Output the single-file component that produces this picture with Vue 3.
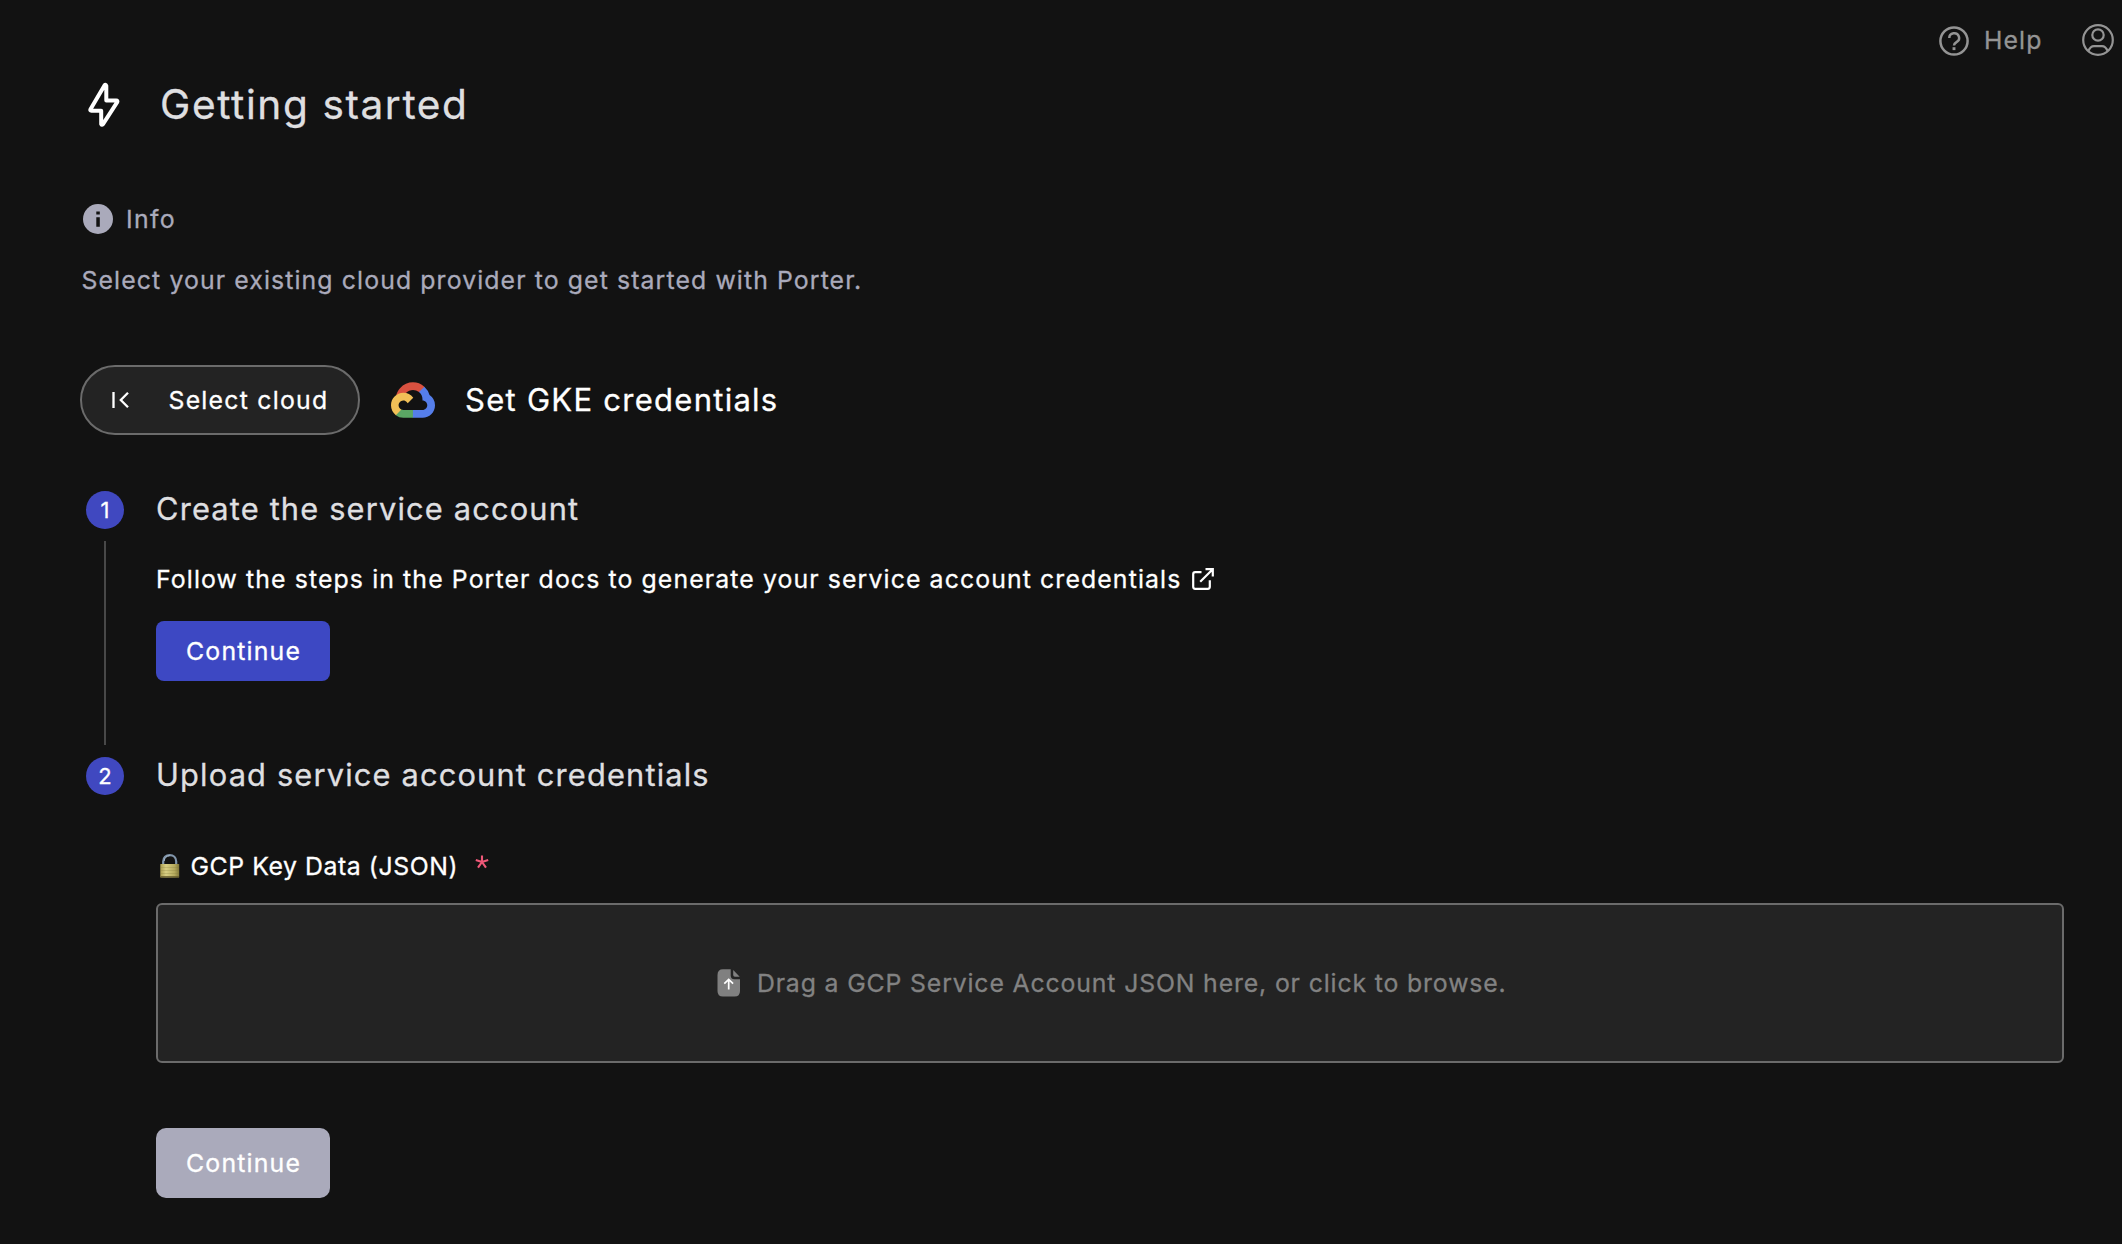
<script setup>
const steps = [
  { number: 1, title: 'Create the service account' },
  { number: 2, title: 'Upload service account credentials' },
]
</script>

<template>
  <div class="page">
    <nav class="topbar">
      <a class="help">
        <svg width="30" height="30" viewBox="0 0 30 30" fill="none" stroke="currentColor" stroke-width="2.5">
          <circle cx="15" cy="15" r="13.6" />
          <path d="M10.3 12a4.9 4.7 0 1 1 7.2 4.1c-1.7 1-2.5 1.8-2.5 3.4" />
          <path d="M15 21.2v2.9" stroke-width="2.9" />
        </svg>
        <span class="t-help">Help</span>
      </a>
      <svg class="user" width="32" height="32" viewBox="0 0 32 32" fill="none" stroke="currentColor" stroke-width="2.2">
        <circle cx="16" cy="16" r="14.8" />
        <circle cx="16" cy="11" r="5.7" />
        <path d="M6.3 27c1.500-3.600 3.200-4.900 5.700-4.900h8c2.500 0 4.200 1.300 5.700 4.900" />
      </svg>
    </nav>

    <header class="title">
      <svg width="34" height="46" viewBox="0 0 34 46" fill="none" stroke="#fff" stroke-width="4" stroke-linejoin="round">
        <path d="M17.600 3.200L3.500 27.200q-.8 1.500.9 1.500H14.200V42q.5 1.500 1.800.2L30.200 20.200q.8-1.700-1-1.700H19.300V3.800q-.6-1.700-1.700-.6z" />
      </svg>
      <h1>Getting started</h1>
    </header>

    <div class="info">
      <svg width="30" height="30" viewBox="0 0 30 30">
        <circle cx="15" cy="15" r="15" fill="#aaaabb" />
        <path d="M13.300 7.500h3.500v3h-3.500zM13.300 13.200h3.500v9.600h-3.500z" fill="#121212" />
      </svg>
      <span class="t-info">Info</span>
    </div>
    <p class="lead">Select your existing cloud provider to get started with Porter.</p>

    <div class="provider">
      <button class="back">
        <svg width="18" height="18" viewBox="0 0 18 18" fill="none" stroke="#fff" stroke-width="2.300">
          <path d="M1.500 1v16M16 1.700L8.800 9l7.200 7.300" />
        </svg>
        <span>Select cloud</span>
      </button>
      <svg class="cloud" width="44" height="36" viewBox="0 0 256 206">
        <path fill="#d95140" d="M170.252 56.819l22.253-22.253 1.483-9.370C153.437-11.677 88.976-7.496 52.420 33.920 42.267 45.423 34.734 59.764 30.717 74.573l7.970-1.123 44.505-7.340 3.436-3.513c19.797-21.742 53.270-24.667 76.128-6.168l7.496.390z" />
        <path fill="#557eea" d="M224.205 73.918a100.250 100.250 0 0 0-30.217-48.722l-31.232 31.232a55.515 55.515 0 0 1 20.379 44.037v5.544c15.350 0 27.797 12.445 27.797 27.796 0 15.352-12.446 27.573-27.797 27.573h-55.671l-5.466 5.934v33.340l5.466 5.231h55.671c39.930.311 72.553-31.494 72.864-71.424a72.303 72.303 0 0 0-31.794-60.541" />
        <path fill="#5ba664" d="M71.870 205.796h55.593V161.290H71.870a27.275 27.275 0 0 1-11.400-2.498l-7.887 2.420-22.409 22.253-1.952 7.574c12.567 9.489 27.900 14.825 43.648 14.757" />
        <path fill="#f1c057" d="M71.870 61.425C31.940 61.663-.237 94.227.001 134.157a72.301 72.301 0 0 0 28.221 56.880l32.248-32.246c-13.990-6.322-20.208-22.786-13.887-36.776 6.320-13.990 22.786-20.208 36.775-13.888a27.796 27.796 0 0 1 13.887 13.888l32.248-32.248A72.224 72.224 0 0 0 71.870 61.425" />
      </svg>
      <h2>Set GKE credentials</h2>
    </div>

    <section class="step first">
      <div class="rail">
        <span class="badge">{{ steps[0].number }}</span>
        <span class="line"></span>
      </div>
      <div class="body">
        <h3>{{ steps[0].title }}</h3>
        <a class="docs">
          <span>Follow the steps in the Porter docs to generate your service account credentials</span>
          <svg width="22" height="22" viewBox="0 0 22 22" fill="none" stroke="#fff" stroke-width="2.200">
            <path d="M9.500 4.200H3.200Q1.200 4.200 1.200 6.200V18.800Q1.200 20.800 3.200 20.800H15.800Q17.800 20.800 17.800 18.800V12.300M13.500 1.200H20.800V8.500M20.500 1.500L8.200 13.800" />
          </svg>
        </a>
        <button class="btn primary"><span>Continue</span></button>
      </div>
    </section>

    <section class="step">
      <div class="rail">
        <span class="badge">{{ steps[1].number }}</span>
      </div>
      <div class="body">
        <h3>{{ steps[1].title }}</h3>
        <label class="field">
          <svg width="20" height="24" viewBox="0 0 20 24">
            <defs>
              <linearGradient id="brass" x1="0" x2="1">
                <stop offset="0" stop-color="#aa9d50" />
                <stop offset=".3" stop-color="#d9cf84" />
                <stop offset=".75" stop-color="#b5aa5d" />
                <stop offset="1" stop-color="#82783a" />
              </linearGradient>
            </defs>
            <path d="M3.200 11V7.500C3.200 3.500 6 1.200 9.700 1.200S16.200 3.500 16.200 7.500V11" fill="none" stroke="#8195aa" stroke-width="2.200" />
            <path d="M4.200 7C4.500 3.800 6.600 2 9.700 1.700" fill="none" stroke="#b9cfe4" stroke-width=".8" />
            <rect x=".3" y="10" width="18.900" height="13.500" rx=".6" fill="url(#brass)" />
            <path d="M.6 22.800H19" stroke="#655b2c" stroke-width="1.200" />
            <path d="M.6 13.500H19M.6 16.500H19M.6 19.500H19" stroke="#827a3c" stroke-width=".5" opacity=".5" />
          </svg>
          <span class="t-key">GCP Key Data (JSON)</span>
          <svg class="required" width="14" height="14" viewBox="0 0 14 14" stroke="#ef5878" stroke-width="2.100">
            <path d="M7 7V.5M7 7L.8 5M7 7l6.200-2M7 7l-4 5.700M7 7l4 5.700" />
          </svg>
        </label>
        <div class="drop">
          <svg width="24" height="28" viewBox="0 0 24 28">
            <path fill="#808080" d="M6 .3H13.700V6.500Q13.700 10.200 17.300 10.200H23V22Q23 27.500 17.500 27.500H6Q.5 27.500 .5 22V6Q.5.3 6 .3zM16.200 1L22.700 7.800H18Q16.200 7.800 16.200 6z" />
            <path d="M11.700 20.500V11M7.300 14.700L11.700 10.400L16.100 14.700" fill="none" stroke="#fff" stroke-width="1.700" />
          </svg>
          <span>Drag a GCP Service Account JSON here, or click to browse.</span>
        </div>
        <button class="btn disabled" disabled><span>Continue</span></button>
      </div>
    </section>
  </div>
</template>

<style>
body {
  background: #121212;
}
</style>

<style scoped>
.page {
  box-sizing: border-box;
  width: 2122px;
  height: 1244px;
  padding: 0 58px 0 80px;
  overflow: hidden;
  background: #121212;
  color: #fff;
  font: 400 24.8px/30px Inter, "Liberation Sans", sans-serif;
  -webkit-text-stroke: 0.3px currentColor;
  white-space: nowrap;
}
svg {
  display: block;
  flex: none;
}
h1, h2, h3, p {
  margin: 0;
  font-weight: 400;
}
button {
  box-sizing: border-box;
  padding: 0;
  border: 0;
  color: #fff;
  font: inherit;
  text-align: left;
}
.topbar {
  display: flex;
  justify-content: flex-end;
  align-items: center;
  height: 80px;
  margin-right: -50px;
  color: #949494;
}
.help {
  display: flex;
  align-items: center;
  width: 143px;
}
.help svg { margin: 2px 15px 0 0; }
.t-help { letter-spacing: 1.1px; }
.title {
  display: flex;
  align-items: center;
  height: 50px;
  padding-left: 7px;
}
.title h1 {
  margin-left: 39px;
  color: #dfdfe0;
  font-size: 40.6px;
  line-height: 50px;
  letter-spacing: 1.6px;
}
.info {
  display: flex;
  align-items: center;
  gap: 13px;
  height: 30px;
  margin-top: 74px;
  padding-left: 3px;
  color: #aaaabb;
}
.t-info { letter-spacing: 1.3px; }
.lead {
  margin: 31px 0 0 1.5px;
  color: #aaaabb;
  letter-spacing: 1.115px;
}
.provider {
  display: flex;
  align-items: center;
  height: 70px;
  margin-top: 70px;
}
.back {
  display: flex;
  align-items: center;
  width: 280px;
  height: 70px;
  padding-left: 29.5px;
  border: 2px solid #6b6b6b;
  border-radius: 35px;
  background: #232323;
}
.back span { margin-left: 39px; letter-spacing: 1.25px; }
.cloud { margin-left: 30.5px; }
h2 {
  margin-left: 30.5px;
  font-size: 31px;
  letter-spacing: 1.27px;
}
.step {
  display: flex;
  padding-left: 6px;
}
.first {
  height: 266px;
  margin-top: 56px;
}
.rail {
  display: flex;
  flex-direction: column;
  align-items: center;
  width: 38px;
}
.badge {
  width: 38px;
  height: 38px;
  border-radius: 50%;
  background: #4048c0;
  font-size: 22px;
  line-height: 38px;
  text-align: center;
}
.line {
  width: 2px;
  height: 204px;
  margin-top: 12px;
  background: #484848;
}
.body {
  flex: 1;
  margin-left: 32px;
}
h3 {
  height: 37px;
  color: #dfdfe0;
  font-size: 30.8px;
  line-height: 35px;
  letter-spacing: 1.16px;
}
.docs {
  display: flex;
  align-items: center;
  gap: 11px;
  height: 30px;
  margin-top: 36px;
  letter-spacing: 1.12px;
}
.btn {
  display: block;
  width: 174px;
  padding: 0 0 0 30px;
  letter-spacing: 1.2px;
}
.primary {
  height: 60px;
  margin-top: 27px;
  border-radius: 8px;
  background: #3d48c3;
}
.field {
  display: flex;
  align-items: center;
  height: 30px;
  margin: 57px 0 0 4px;
}
.t-key { margin-left: 10.5px; letter-spacing: 0.57px; }
.required { margin: -8px 0 0 16.5px; }
.drop {
  box-sizing: border-box;
  display: flex;
  align-items: center;
  justify-content: center;
  gap: 15.5px;
  height: 160px;
  margin-top: 22px;
  padding-left: 4px;
  border: 2px solid #6b6b6b;
  border-radius: 6px;
  background: #232323;
  color: #828282;
  letter-spacing: 0.86px;
}
.disabled {
  height: 70px;
  margin-top: 65px;
  border-radius: 10px;
  background: #aaaabb;
}
</style>
